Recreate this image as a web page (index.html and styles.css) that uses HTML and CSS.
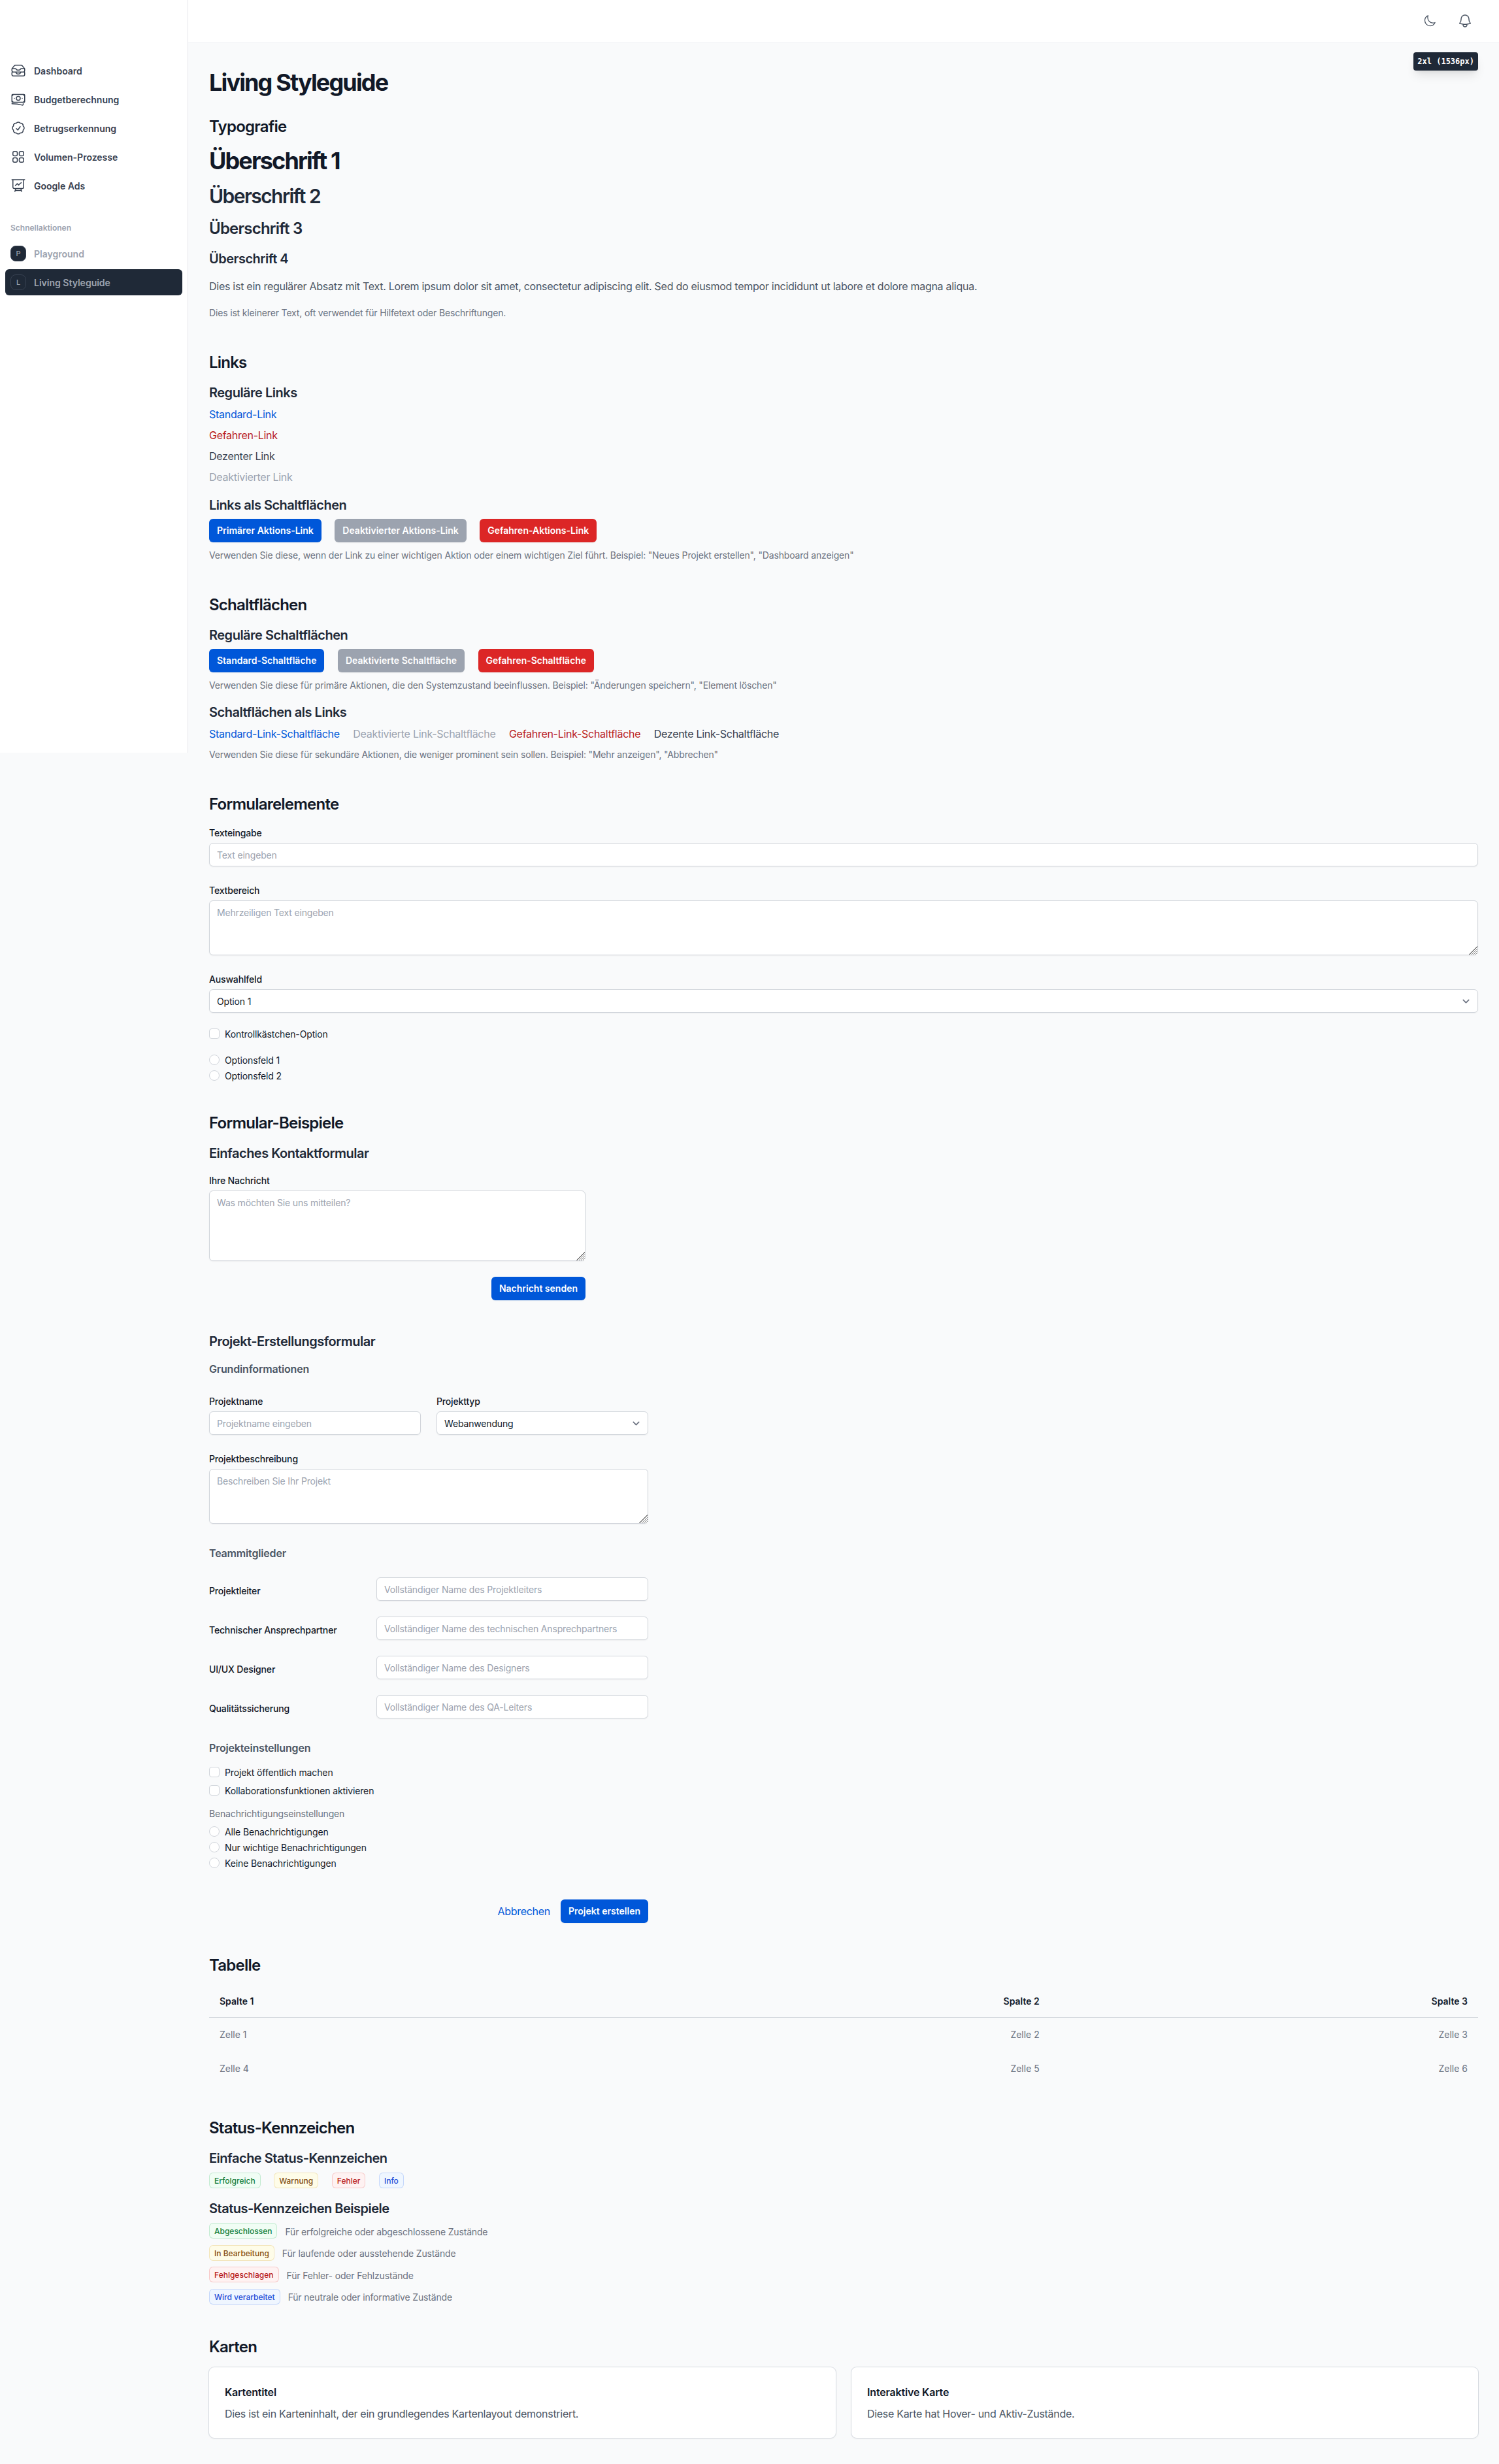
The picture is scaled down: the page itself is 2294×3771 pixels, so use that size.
FILE: index.html
```html
<!DOCTYPE html>
<html lang="de">
<head>
<meta charset="utf-8">
<title>Living Styleguide</title>
<link rel="stylesheet" href="styles.css">
</head>
<body>
<div class="layout">
<aside class="sidebar">
<nav>
<ul class="nav">
<li><a class="nav-item"><svg class="icon" viewBox="0 0 24 24"><path d="m7.875 14.25 1.214 1.942a2.25 2.25 0 0 0 1.908 1.058h2.006c.776 0 1.497-.4 1.908-1.058l1.214-1.942M2.41 9h4.636a2.25 2.25 0 0 1 1.872 1.002l.164.246a2.25 2.25 0 0 0 1.872 1.002h2.092a2.25 2.25 0 0 0 1.872-1.002l.164-.246A2.25 2.25 0 0 1 16.954 9h4.636M2.41 9a2.25 2.25 0 0 0-.16.832V12a2.25 2.25 0 0 0 2.25 2.25h15A2.25 2.25 0 0 0 21.75 12V9.832c0-.287-.055-.57-.16-.832M2.41 9a2.25 2.25 0 0 1 .382-.632l3.285-3.832a2.25 2.25 0 0 1 1.708-.786h8.43c.657 0 1.281.287 1.709.786l3.284 3.832c.163.19.291.404.382.632M4.5 20.25h15A2.25 2.25 0 0 0 21.75 18v-2.625c0-.621-.504-1.125-1.125-1.125H3.375c-.621 0-1.125.504-1.125 1.125V18a2.25 2.25 0 0 0 2.25 2.25Z"/></svg><span>Dashboard</span></a></li>
<li><a class="nav-item"><svg class="icon" viewBox="0 0 24 24"><path d="M2.25 18.75a60.07 60.07 0 0 1 15.797 2.101c.727.198 1.453-.342 1.453-1.096V18.75M3.75 4.5v.75A.75.75 0 0 1 3 6h-.75m0 0v-.375c0-.621.504-1.125 1.125-1.125H20.25M2.25 6v9m18-10.5v.75c0 .414.336.75.75.75h.75m-1.5-1.5h.375c.621 0 1.125.504 1.125 1.125v9.75c0 .621-.504 1.125-1.125 1.125h-.375m1.5-1.5H21a.75.75 0 0 0-.75.75v.75m0 0H3.75m0 0h-.375a1.125 1.125 0 0 1-1.125-1.125V15m1.5 1.5v-.75A.75.75 0 0 0 3 15h-.75M15 10.5a3 3 0 1 1-6 0 3 3 0 0 1 6 0Zm3 0h.008v.008H18V10.5Zm-12 0h.008v.008H6V10.5Z"/></svg><span>Budgetberechnung</span></a></li>
<li><a class="nav-item"><svg class="icon" viewBox="0 0 24 24"><path d="M9 12.75 11.25 15 15 9.75M21 12c0 1.268-.63 2.39-1.593 3.068a3.745 3.745 0 0 1-1.043 3.296 3.745 3.745 0 0 1-3.296 1.043A3.745 3.745 0 0 1 12 21c-1.268 0-2.39-.63-3.068-1.593a3.746 3.746 0 0 1-3.296-1.043 3.745 3.745 0 0 1-1.043-3.296A3.745 3.745 0 0 1 3 12c0-1.268.63-2.39 1.593-3.068a3.745 3.745 0 0 1 1.043-3.296 3.746 3.746 0 0 1 3.296-1.043A3.746 3.746 0 0 1 12 3c1.268 0 2.39.63 3.068 1.593a3.746 3.746 0 0 1 3.296 1.043 3.746 3.746 0 0 1 1.043 3.296A3.745 3.745 0 0 1 21 12Z"/></svg><span>Betrugserkennung</span></a></li>
<li><a class="nav-item"><svg class="icon" viewBox="0 0 24 24"><path d="M3.75 6A2.25 2.25 0 0 1 6 3.75h2.25A2.25 2.25 0 0 1 10.5 6v2.25a2.25 2.25 0 0 1-2.25 2.25H6a2.25 2.25 0 0 1-2.25-2.25V6ZM3.75 15.75A2.25 2.25 0 0 1 6 13.5h2.25a2.25 2.25 0 0 1 2.25 2.25V18a2.25 2.25 0 0 1-2.25 2.25H6A2.25 2.25 0 0 1 3.75 18v-2.25ZM13.5 6a2.25 2.25 0 0 1 2.25-2.25H18A2.25 2.25 0 0 1 20.25 6v2.25A2.25 2.25 0 0 1 18 10.5h-2.25a2.25 2.25 0 0 1-2.25-2.25V6ZM13.5 15.75a2.25 2.25 0 0 1 2.25-2.25H18a2.25 2.25 0 0 1 2.25 2.25V18A2.25 2.25 0 0 1 18 20.25h-2.25A2.25 2.25 0 0 1 13.5 18v-2.25Z"/></svg><span>Volumen-Prozesse</span></a></li>
<li><a class="nav-item"><svg class="icon" viewBox="0 0 24 24"><path d="M3.75 3v11.25A2.25 2.25 0 0 0 6 16.5h2.25M3.75 3h-1.5m1.5 0h16.5m0 0h1.5m-1.5 0v11.25A2.25 2.25 0 0 1 18 16.5h-2.25m-7.5 0h7.5m-7.5 0-1 3m8.5-3 1 3m0 0 .5 1.5m-.5-1.5h-9.5m0 0-.5 1.5m.75-9 3-3 2.148 2.148A12.061 12.061 0 0 1 16.5 7.605"/></svg><span>Google Ads</span></a></li>
</ul>
<div class="nav-title">Schnellaktionen</div>
<ul class="nav">
<li><a class="nav-item muted"><span class="letter">P</span><span>Playground</span></a></li>
<li><a class="nav-item muted active"><span class="letter">L</span><span>Living Styleguide</span></a></li>
</ul>
</nav>
</aside>
<div class="page">
<header class="topbar">
<svg class="icon moon" viewBox="0 0 24 24"><path d="M21.752 15.002A9.72 9.72 0 0 1 18 15.75c-5.385 0-9.75-4.365-9.75-9.75 0-1.33.266-2.597.748-3.752A9.753 9.753 0 0 0 3 11.25C3 16.635 7.365 21 12.75 21a9.753 9.753 0 0 0 9.002-5.998Z"/></svg>
<svg class="icon" viewBox="0 0 24 24"><path d="M14.857 17.082a23.848 23.848 0 0 0 5.454-1.31A8.967 8.967 0 0 1 18 9.75V9A6 6 0 0 0 6 9v.75a8.967 8.967 0 0 1-2.312 6.022c1.733.64 3.56 1.085 5.455 1.31m5.714 0a24.255 24.255 0 0 1-5.714 0m5.714 0a3 3 0 1 1-5.714 0"/></svg>
</header>
<div class="breakpoint">2xl (1536px)</div>
<main class="main">
<h1 class="h1 title">Living Styleguide</h1>

<section class="section">
<h2 class="h3 section-title">Typografie</h2>
<div class="stack-16">
<div class="h1">Überschrift 1</div>
<div class="h2">Überschrift 2</div>
<div class="h3 dark">Überschrift 3</div>
<div class="h4">Überschrift 4</div>
<p class="text">Dies ist ein regulärer Absatz mit Text. Lorem ipsum dolor sit amet, consectetur adipiscing elit. Sed do eiusmod tempor incididunt ut labore et dolore magna aliqua.</p>
<p class="small">Dies ist kleinerer Text, oft verwendet für Hilfetext oder Beschriftungen.</p>
</div>
</section>

<section class="section">
<h2 class="h3 section-title">Links</h2>
<div class="stack-16">
<div class="stack-8">
<h3 class="h4">Reguläre Links</h3>
<div><a class="link">Standard-Link</a></div>
<div><a class="link danger">Gefahren-Link</a></div>
<div><a class="link subtle">Dezenter Link</a></div>
<div><a class="link disabled">Deaktivierter Link</a></div>
</div>
<div class="stack-8">
<h3 class="h4">Links als Schaltflächen</h3>
<div class="row"><a class="btn">Primärer Aktions-Link</a><a class="btn disabled">Deaktivierter Aktions-Link</a><a class="btn danger">Gefahren-Aktions-Link</a></div>
<p class="small">Verwenden Sie diese, wenn der Link zu einer wichtigen Aktion oder einem wichtigen Ziel führt. Beispiel: "Neues Projekt erstellen", "Dashboard anzeigen"</p>
</div>
</div>
</section>

<section class="section">
<h2 class="h3 section-title">Schaltflächen</h2>
<div class="stack-16">
<div class="stack-8">
<h3 class="h4">Reguläre Schaltflächen</h3>
<div class="row"><button class="btn">Standard-Schaltfläche</button><button class="btn disabled">Deaktivierte Schaltfläche</button><button class="btn danger">Gefahren-Schaltfläche</button></div>
<p class="small">Verwenden Sie diese für primäre Aktionen, die den Systemzustand beeinflussen. Beispiel: "Änderungen speichern", "Element löschen"</p>
</div>
<div class="stack-8">
<h3 class="h4">Schaltflächen als Links</h3>
<div class="row"><button class="link">Standard-Link-Schaltfläche</button><button class="link disabled">Deaktivierte Link-Schaltfläche</button><button class="link danger">Gefahren-Link-Schaltfläche</button><button class="link subtle">Dezente Link-Schaltfläche</button></div>
<p class="small">Verwenden Sie diese für sekundäre Aktionen, die weniger prominent sein sollen. Beispiel: "Mehr anzeigen", "Abbrechen"</p>
</div>
</div>
</section>

<section class="section">
<h2 class="h3 section-title">Formularelemente</h2>
<div class="stack-24">
<div class="field"><label>Texteingabe</label><input class="control" placeholder="Text eingeben"></div>
<div class="field"><label>Textbereich</label><textarea class="control" rows="3" placeholder="Mehrzeiligen Text eingeben"></textarea></div>
<div class="field"><label>Auswahlfeld</label><div class="control select"><span>Option 1</span><svg class="chevron" viewBox="0 0 20 20"><path d="M6 8l4 4 4-4"/></svg></div></div>
<label class="choice"><span class="box"></span>Kontrollkästchen-Option</label>
<div class="stack-8">
<label class="choice"><span class="box round"></span>Optionsfeld 1</label>
<label class="choice"><span class="box round"></span>Optionsfeld 2</label>
</div>
</div>
</section>

<section class="section">
<h2 class="h3 section-title">Formular-Beispiele</h2>
<div class="stack-48">
<div class="form-narrow">
<h3 class="h4 form-title">Einfaches Kontaktformular</h3>
<div class="stack-24">
<div class="field"><label>Ihre Nachricht</label><textarea class="control" rows="4" placeholder="Was möchten Sie uns mitteilen?"></textarea></div>
<div class="actions"><button class="btn">Nachricht senden</button></div>
</div>
</div>
<div class="form-wide">
<h3 class="h4 form-title">Projekt-Erstellungsformular</h3>
<div class="stack-32">
<div class="stack-24">
<h4 class="group-title">Grundinformationen</h4>
<div class="columns">
<div class="field"><label>Projektname</label><input class="control" placeholder="Projektname eingeben"></div>
<div class="field"><label>Projekttyp</label><div class="control select"><span>Webanwendung</span><svg class="chevron" viewBox="0 0 20 20"><path d="M6 8l4 4 4-4"/></svg></div></div>
</div>
<div class="field"><label>Projektbeschreibung</label><textarea class="control" rows="3" placeholder="Beschreiben Sie Ihr Projekt"></textarea></div>
</div>
<div class="stack-24">
<h4 class="group-title">Teammitglieder</h4>
<div class="field-row"><label>Projektleiter</label><input class="control" placeholder="Vollständiger Name des Projektleiters"></div>
<div class="field-row"><label>Technischer Ansprechpartner</label><input class="control" placeholder="Vollständiger Name des technischen Ansprechpartners"></div>
<div class="field-row"><label>UI/UX Designer</label><input class="control" placeholder="Vollständiger Name des Designers"></div>
<div class="field-row"><label>Qualitätssicherung</label><input class="control" placeholder="Vollständiger Name des QA-Leiters"></div>
</div>
<div class="stack-16">
<h4 class="group-title">Projekteinstellungen</h4>
<div class="stack-12">
<label class="choice"><span class="box"></span>Projekt öffentlich machen</label>
<label class="choice"><span class="box"></span>Kollaborationsfunktionen aktivieren</label>
</div>
<div class="stack-8">
<p class="small">Benachrichtigungseinstellungen</p>
<label class="choice"><span class="box round"></span>Alle Benachrichtigungen</label>
<label class="choice"><span class="box round"></span>Nur wichtige Benachrichtigungen</label>
<label class="choice"><span class="box round"></span>Keine Benachrichtigungen</label>
</div>
</div>
<div class="actions last"><button class="link">Abbrechen</button><button class="btn">Projekt erstellen</button></div>
</div>
</div>
</div>
</section>

<section class="section">
<h2 class="h3 section-title">Tabelle</h2>
<table class="table">
<thead><tr><th>Spalte 1</th><th>Spalte 2</th><th>Spalte 3</th></tr></thead>
<tbody><tr><td>Zelle 1</td><td>Zelle 2</td><td>Zelle 3</td></tr><tr><td>Zelle 4</td><td>Zelle 5</td><td>Zelle 6</td></tr></tbody>
</table>
</section>

<section class="section">
<h2 class="h3 section-title">Status-Kennzeichen</h2>
<div class="stack-16">
<div class="stack-8">
<h3 class="h4">Einfache Status-Kennzeichen</h3>
<div class="row badges"><span class="badge green">Erfolgreich</span><span class="badge yellow">Warnung</span><span class="badge red">Fehler</span><span class="badge blue">Info</span></div>
</div>
<div class="stack-8">
<h3 class="h4">Status-Kennzeichen Beispiele</h3>
<div class="status"><span class="badge green">Abgeschlossen</span><span class="small">Für erfolgreiche oder abgeschlossene Zustände</span></div>
<div class="status"><span class="badge yellow">In Bearbeitung</span><span class="small">Für laufende oder ausstehende Zustände</span></div>
<div class="status"><span class="badge red">Fehlgeschlagen</span><span class="small">Für Fehler- oder Fehlzustände</span></div>
<div class="status"><span class="badge blue">Wird verarbeitet</span><span class="small">Für neutrale oder informative Zustände</span></div>
</div>
</div>
</section>

<section class="section">
<h2 class="h3 section-title">Karten</h2>
<div class="cards">
<div class="card"><h3>Kartentitel</h3><p>Dies ist ein Karteninhalt, der ein grundlegendes Kartenlayout demonstriert.</p></div>
<div class="card"><h3>Interaktive Karte</h3><p>Diese Karte hat Hover- und Aktiv-Zustände.</p></div>
</div>
</section>
</main>
</div>
</div>
</body>
</html>
```
FILE: styles.css
```css
*, *::before, *::after { box-sizing: border-box; }
body, h1, h2, h3, h4, p, ul { margin: 0; padding: 0; }
ul { list-style: none; }
body {
  background: #f9fafb;
  color: #111827;
  font-family: Inter, "Liberation Sans", sans-serif;
  font-size: 16px;
  line-height: 24px;
}
button, input, textarea { font: inherit; margin: 0; }
button { border: 0; padding: 0; background: none; }

.layout { display: flex; align-items: flex-start; min-height: 3771px; }
.sidebar {
  flex: none;
  width: 288px;
  height: 1152px;
  padding: 88px 8px 0;
  background: #fff;
  border-right: 1px solid #e5e7eb;
}
.nav { display: flex; flex-direction: column; gap: 4px; }
.nav-item {
  display: flex;
  align-items: center;
  gap: 12px;
  height: 40px;
  padding: 8px;
  border-radius: 6px;
  font-size: 14px;
  font-weight: 600;
  color: #374151;
}
.nav-item > span:last-child { padding-top: 1px; line-height: 23px; }
.nav-item.muted { color: #9ca3af; }
.nav-item.active { background: #1f2937; }
.nav-title {
  margin: 32px 8px 8px;
  padding-top: 1px;
  font-size: 12px;
  line-height: 23px;
  font-weight: 600;
  color: #9ca3af;
}
.letter {
  display: flex;
  align-items: center;
  justify-content: center;
  width: 24px;
  height: 24px;
  border: 1px solid #374151;
  border-radius: 8px;
  background: #1f2937;
  font-size: 11px;
  font-weight: 500;
}
.icon {
  flex: none;
  width: 24px;
  height: 24px;
  fill: none;
  stroke: currentColor;
  stroke-width: 1.5;
  stroke-linecap: round;
  stroke-linejoin: round;
}

.page { flex: 1; min-width: 0; position: relative; }
.topbar {
  display: flex;
  align-items: center;
  justify-content: flex-end;
  gap: 32px;
  height: 65px;
  padding-right: 40px;
  background: #fff;
  border-bottom: 1px solid #f3f4f6;
  color: #4b5563;
}
.icon.moon { width: 20px; height: 20px; }
.breakpoint {
  position: absolute;
  top: 80px;
  right: 32px;
  padding: 6px;
  border-radius: 4px;
  background: #1f2937;
  color: #fff;
  font: bold 12px/16px "DejaVu Sans Mono", monospace;
  box-shadow: 0 10px 15px -3px rgba(0,0,0,.1), 0 4px 6px -4px rgba(0,0,0,.1);
}
.main { padding: 40px 32px; }

.h1, .h2, .h3, .h4 { padding-top: 2px; }
.h1 { font-size: 36px; line-height: 38px; font-weight: 700; letter-spacing: -1.85px; }
.title { margin-bottom: 32px; }
.h2 { font-size: 30px; line-height: 34px; font-weight: 600; letter-spacing: -1.55px; color: #1f2937; }
.h3 { font-size: 24px; line-height: 30px; font-weight: 600; letter-spacing: -0.77px; }
.h3.dark { color: #1f2937; }
.h4 { font-size: 20px; line-height: 26px; font-weight: 600; letter-spacing: -0.5px; color: #1f2937; }
.text { line-height: 26px; letter-spacing: -0.27px; color: #4b5563; }
.small { padding-top: 1px; font-size: 14px; line-height: 21.75px; letter-spacing: -0.165px; color: #6b7280; }

.section { margin-bottom: 48px; }
.section-title, .form-title { margin-bottom: 16px; }
.stack-8, .stack-12, .stack-16, .stack-24, .stack-32, .stack-48 { display: flex; flex-direction: column; }
.stack-8 { gap: 8px; }
.stack-12 { gap: 12px; }
.stack-16 { gap: 16px; }
.stack-24 { gap: 24px; }
.stack-32 { gap: 32px; }
.stack-48 { gap: 48px; }
.row { display: flex; gap: 20.5px; }

.link { letter-spacing: -0.28px; color: #0057d9; }
.link.danger { color: #b91c1c; }
.link.subtle { color: #374151; }
.link.disabled { color: #9ca3af; }
.btn {
  height: 36px;
  padding: 8px 12px;
  border-radius: 6px;
  background: #0057d9;
  color: #fff;
  font-size: 14px;
  line-height: 20px;
  font-weight: 600;
  box-shadow: 0 1px 2px rgba(0,0,0,.05);
}
.btn.disabled { background: #9ca3af; }
.btn.danger { background: #dc2626; }

.field { display: flex; flex-direction: column; gap: 4px; }
.field label, .field-row label {
  padding-top: 1px;
  font-size: 14px;
  line-height: 23px;
  font-weight: 500;
  letter-spacing: -0.16px;
}
.control {
  display: block;
  width: 100%;
  padding: 5px 11px;
  border: 1px solid #d1d5db;
  border-radius: 6px;
  background: #fff;
  color: #111827;
  font-size: 14px;
  line-height: 24px;
  letter-spacing: -0.165px;
  box-shadow: 0 1px 2px rgba(0,0,0,.05);
}
input.control { height: 36px; }
textarea.control { padding: 6px 11px 4px; }
textarea.control::-webkit-resizer {
  background: linear-gradient(135deg, #fff 12px, #808080 12px 13px, #fff 13px 14.2px, #808080 14.2px 15.2px, #fff 15.2px 16.4px, #808080 16.4px 17.4px, #fff 17.4px 18.6px, #808080 18.6px 19.6px, #fff 19.6px);
}
.control::placeholder { color: #9ca3af; opacity: 1; }
.select { display: flex; align-items: center; justify-content: space-between; height: 36px; padding-right: 7px; }
.select span { padding-top: 1px; line-height: 23px; }
.chevron {
  width: 21px;
  height: 21px;
  fill: none;
  stroke: #6b7280;
  stroke-width: 1.6;
  stroke-linecap: round;
  stroke-linejoin: round;
}
.choice { display: flex; gap: 8px; height: 16px; font-size: 14px; line-height: 17px; letter-spacing: -0.13px; }
.box { width: 16px; height: 16px; border: 1px solid #d1d5db; border-radius: 4px; background: #fff; }
.box.round { border-radius: 50%; }

.form-narrow { width: 576px; }
.form-wide { width: 672px; }
.group-title { font-size: 16px; line-height: 26px; font-weight: 600; letter-spacing: -0.17px; color: #4b5563; }
.columns { display: grid; grid-template-columns: 1fr 1fr; gap: 24px; }
.field-row { display: grid; grid-template-columns: 256px 1fr; height: 36px; }
.field-row label { padding-top: 9px; }
.actions { display: flex; justify-content: flex-end; align-items: center; gap: 16px; }
.actions.last { margin-top: 16px; }

.table { width: 100%; border-collapse: collapse; font-size: 14px; line-height: 20px; }
.table th { height: 49px; padding: 0 16px; border-bottom: 1px solid #d1d5db; text-align: right; font-weight: 600; }
.table td { height: 52px; padding: 0 16px; text-align: right; color: #6b7280; }
.table th:first-child, .table td:first-child { text-align: left; }

.badge {
  height: 24px;
  padding: 5px 8px 4px;
  border-radius: 6px;
  font-size: 12px;
  line-height: 15px;
  font-weight: 500;
}
.badges { height: 25px; align-items: flex-end; }
.green { background: #f0fdf4; color: #15803d; box-shadow: inset 0 0 0 1px rgba(22,163,74,.2); }
.yellow { background: #fefce8; color: #854d0e; box-shadow: inset 0 0 0 1px rgba(202,138,4,.2); }
.red { background: #fef2f2; color: #b91c1c; box-shadow: inset 0 0 0 1px rgba(220,38,38,.2); }
.blue { background: #eff6ff; color: #1d4ed8; box-shadow: inset 0 0 0 1px rgba(37,99,235,.2); }
.status { display: flex; align-items: flex-end; gap: 12px; height: 25.5px; }

.cards { display: grid; grid-template-columns: 1fr 1fr; gap: 24px; }
.card { padding: 24px; border-radius: 8px; background: #fff; box-shadow: 0 0 0 1px #d6dae0, 0 1px 3px rgba(0,0,0,.08); }
.card h3 { font-size: 16px; line-height: 28px; font-weight: 600; letter-spacing: -0.17px; }
.card p { margin-top: 6px; line-height: 26px; letter-spacing: -0.3px; color: #4b5563; }
```
